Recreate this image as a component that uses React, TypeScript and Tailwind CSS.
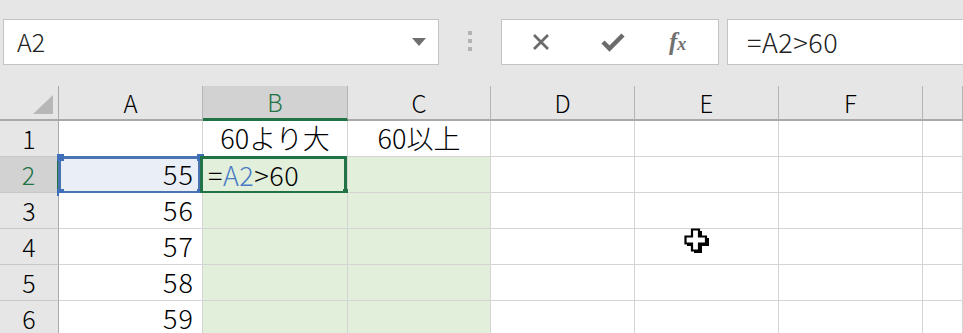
import React from "react";

const cols = [
  { id: "A", w: "w-[144px]" },
  { id: "B", w: "w-[145px]" },
  { id: "C", w: "w-[143px]" },
  { id: "D", w: "w-[144px]" },
  { id: "E", w: "w-[144px]" },
  { id: "F", w: "w-[144px]" },
  { id: "G", w: "flex-1" },
];

const values: Record<number, string> = { 3: "56", 4: "57", 5: "58", 6: "59" };

function Cursor() {
  return (
    <svg width="26" height="26" viewBox="0 0 26 26" className="absolute left-[684px] top-[228px]">
      <path d="M10 3h8v7h7v8h-7v7h-8v-7H3v-8h7z" fill="#000" />
      <path d="M8 1.5h7v7h7v7h-7v7H8v-7H1.5v-7H8z" fill="#fff" stroke="#000" strokeWidth="2.2" />
    </svg>
  );
}

function FormulaText() {
  return (
    <span className="tracking-[0.5px]">
      =<span className="text-[#4a7cc6]">A2</span>&gt;60
    </span>
  );
}

export default function App() {
  const font = "font-['Noto_Sans_CJK_JP','Liberation_Sans',sans-serif]";
  return (
    <div className={`relative w-[963px] h-[333px] overflow-hidden bg-[#e6e6e6] ${font} font-light text-black`}>
      {/* formula bar */}
      <div className="flex h-[86px] items-start pt-[19px] pl-[3px]">
        <div className="flex h-[46px] w-[436px] items-center justify-between border border-[#c3c3c3] bg-white pl-[13px] pr-[12px] text-[25px] text-[#222]">
          <span>A2</span>
          <svg width="14" height="8" viewBox="0 0 14 8">
            <path d="M0 0h14L7 8z" fill="#6f6f6f" />
          </svg>
        </div>
        <div className="flex w-[62px] flex-col items-center gap-[4px] pt-[12px]">
          <div className="h-[4px] w-[4px] bg-[#b3b3b3]" />
          <div className="h-[4px] w-[4px] bg-[#b3b3b3]" />
          <div className="h-[4px] w-[4px] bg-[#b3b3b3]" />
        </div>
        <div className="flex h-[46px] w-[218px] items-center border border-[#c3c3c3] bg-white">
          <svg width="18" height="18" viewBox="0 0 18 18" className="ml-[30px]">
            <path d="M2 2l14 14M16 2L2 16" stroke="#6b6b6b" strokeWidth="2.8" />
          </svg>
          <svg width="24" height="20" viewBox="0 0 24 20" className="ml-[51px]">
            <path d="M2 10l6.5 6.5L22 3" fill="none" stroke="#6b6b6b" strokeWidth="4.5" />
          </svg>
          <span className="ml-[44px] font-['Liberation_Serif',serif] text-[25px] font-bold italic text-[#707070]">
            f<span className="text-[18px]">x</span>
          </span>
        </div>
        <div className="ml-[8px] flex h-[46px] flex-1 items-center border border-r-0 border-[#c3c3c3] bg-white pl-[19px] text-[27px] tracking-[0.5px] text-[#222]">
          =A2&gt;60
        </div>
      </div>

      {/* column headers */}
      <div className="flex h-[35px] bg-[#e6e6e6]">
        <div className="relative w-[59px] border-r border-b-2 border-[#a9a9a9]">
          <svg width="20" height="19" viewBox="0 0 20 19" className="absolute left-[33px] top-[9px]">
            <path d="M20 0v19H0z" fill="#b7b7b7" />
          </svg>
        </div>
        {cols.map((c) => (
          <div
            key={c.id}
            className={`${c.w} flex items-center justify-center border-r border-[#b5b5b5] text-[24px] ${
              c.id === "B"
                ? "bg-[#d2d2d2] border-b-[3px] border-b-[#217346] text-[#217346]"
                : "border-b-2 border-b-[#a9a9a9]"
            }`}
          >
            {c.id !== "G" && c.id}
          </div>
        ))}
      </div>

      {/* rows */}
      {[1, 2, 3, 4, 5, 6].map((r) => (
        <div key={r} className="flex h-[36px]">
          <div
            className={`flex w-[59px] items-center justify-center border-b border-[#c8c8c8] text-[25px] ${
              r === 2
                ? "bg-[#d2d2d2] border-r-2 border-r-[#217346] text-[#217346]"
                : "bg-[#e6e6e6] border-r border-r-[#a9a9a9]"
            }`}
          >
            {r}
          </div>
          {cols.map((c) => {
            const green = r >= 2 && (c.id === "B" || c.id === "C");
            const blue = r === 2 && c.id === "A";
            let bg = "bg-white";
            if (green) bg = "bg-[#e2efda]";
            if (blue) bg = "bg-[#e9eef7]";
            return (
              <div
                key={c.id}
                className={`${c.w} relative flex items-center border-r border-b border-[#d4d4d4] text-[27px] ${bg} ${
                  c.id === "A" ? "justify-end pr-[8px]" : "justify-center"
                }`}
              >
                {r === 1 && c.id === "B" && <span>60より大</span>}
                {r === 1 && c.id === "C" && <span>60以上</span>}
                {c.id === "A" && r === 2 && <span className="tracking-[1px]">55</span>}
                {c.id === "A" && values[r] && <span className="tracking-[1px]">{values[r]}</span>}
                {r === 2 && c.id === "B" && (
                  <>
                    <div className="absolute inset-x-0 top-0 -bottom-px flex items-center pl-[5px]">
                      <FormulaText />
                    </div>
                    <div className="absolute -left-[3px] -top-px right-0 -bottom-[2px] border-[3px] border-[#217346]" />
                    <div className="absolute -right-[3px] -bottom-[4px] h-[7px] w-[7px] bg-[#217346]" />
                  </>
                )}
                {blue && (
                  <>
                    <div className="absolute -left-px -top-px right-[1px] -bottom-[2px] border-[3px] border-[#4a73b4]" />
                    <div className="absolute -left-[2px] -top-[3px] h-[7px] w-[7px] bg-[#3f6fb8]" />
                    <div className="absolute -right-[2px] -top-[3px] h-[7px] w-[7px] bg-[#3f6fb8]" />
                    <div className="absolute -left-[2px] -bottom-[4px] h-[7px] w-[7px] bg-[#3f6fb8]" />
                    <div className="absolute -right-[2px] -bottom-[4px] h-[7px] w-[7px] bg-[#3f6fb8]" />
                  </>
                )}
              </div>
            );
          })}
        </div>
      ))}

      <Cursor />
    </div>
  );
}
